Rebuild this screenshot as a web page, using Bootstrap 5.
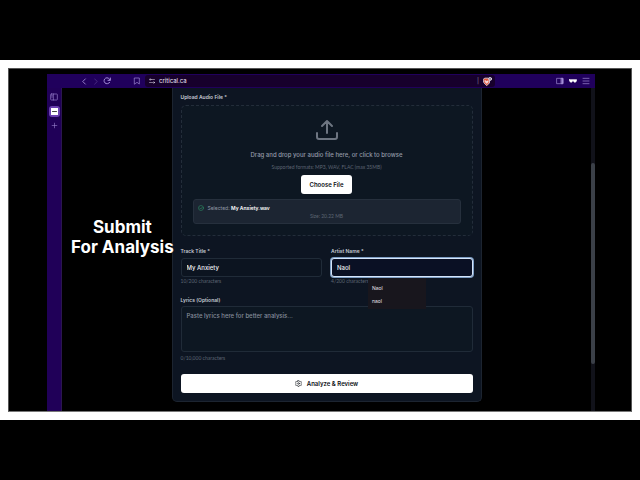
<!DOCTYPE html>
<html lang="en">
<head>
<meta charset="utf-8">
<meta name="viewport" content="width=device-width, initial-scale=1">
<title>Submit for analysis</title>
<link rel="stylesheet" href="https://cdn.jsdelivr.net/npm/bootstrap@5.3.0/dist/css/bootstrap.min.css">
<style>
body{background:#000;color:#d3d8e0;font-family:Inter,"Open Sans",sans-serif;font-size:6px;line-height:8px}
svg{display:block;fill:none;stroke:currentColor;stroke-width:2;stroke-linecap:round;stroke-linejoin:round}
button,input,textarea{font:inherit}
.frame{background:#fff;padding:8px}
.stage{background:#000;padding:5px 36px 0 38px;border:1px solid #555;border-bottom-color:#777}
.chrome-bar{background:#20005c;height:14px;color:#a58ed8;padding:0 5px 0 34px}
.plain{background:none;border:0;padding:0;color:inherit}
.nav-tools{gap:4px}
.mark-btn{margin-left:22px;margin-right:4px}
.address{background:#17002c;color:#f0eaf8;height:12px;padding:0 3px 0 4px;gap:4px;border-radius:3px}
.address input{background:none;border:0;color:inherit;padding:0;min-width:0;outline:0}
.right-tools{margin-left:61px;gap:5px}
.side{background:#200058;width:15px;color:#9c84d0;padding-top:5px;gap:5px;border-right:1px solid #2b1650}
.tab-on{background:#6a3fb0;border-radius:3px;padding:2px;color:#444}
.tab-on span{background:#fff;width:7px;height:7px}
.side-cap{flex:1 1 0;min-width:0;color:#fff;font-weight:700;font-size:17px;line-height:20px;white-space:nowrap;z-index:1}
.side-cap h1{font:inherit;display:inline-block;margin:129px 0 0 9px}
.panel{flex:0 1 310px;background:#0d1522;border:1px solid #1c2430;border-top:0;border-radius:0 0 5px 5px;padding:5px 8px 8px;margin-bottom:9px}
.lab{display:block;font-weight:600;font-size:5px;color:#c5cad3}
.drop{border:1px dashed #232d3a;border-radius:5px;background:#0d1722;margin-top:4px;padding:12px 11px 11px}
.hint{color:#949ba9;font-size:6px;font-weight:500;margin-top:9px}
.tiny{font-family:Lato,sans-serif;font-size:5px;color:#5d6573}
.white-btn{background:#fff;color:#0a0d14;border:0;border-radius:3px;height:19px;font-weight:600;padding:0 9px}
.picked{background:#1c2532;border:1px solid #26303d;border-radius:3px;padding:4px 4px 3px;margin-top:5px}
.picked strong{color:#fff;font-weight:600}
.pick-row{gap:4px;color:#9299a6;font-size:5px}
.ok{color:#2f9d6b}
.pair{gap:9px;margin-top:11px}
.field{display:block;width:100%;background:#0c1420;border:1px solid #202b38;border-radius:3px;color:#eef0f4;height:19px;padding:0 5px;margin-top:3px;outline:0;font-weight:500}
.field::placeholder{color:#858d9b;opacity:1}
.field-on{border-color:#d5e5fa;box-shadow:0 0 0 1px #7d9dc4;background:#0a1024}
.notes{background:#0d1722;height:46px;padding:5px;resize:none;margin:2px 0}
.suggest{position:absolute;left:37px;top:31px;width:58px;background:#18161d;color:#e8e6ea;font-size:5px;padding:6px 4px 4px;z-index:2;gap:5px}
.lyrics{margin-top:11px}
.go{width:100%;margin-top:12px;gap:5px}
.bar{width:4px;background:#11121a;padding-top:75px;padding-bottom:47px}
.thumb{background:#3b4048;border-radius:2px;flex:1}
.side-gap{flex:1 1 0}
</style>
</head>
<body>
<div class="min-vh-100 d-flex flex-column justify-content-center">
<main class="frame">
<div class="stage">
  <header class="chrome-bar d-flex align-items-center">
    <div class="nav-tools d-flex">
      <button class="plain" aria-label="Back"><svg width="7" height="7" viewBox="0 0 24 24"><path d="M15 3l-9 9 9 9" stroke-width="3"/></svg></button>
      <button class="plain opacity-50" aria-label="Forward"><svg width="7" height="7" viewBox="0 0 24 24"><path d="M9 3l9 9-9 9"/></svg></button>
      <button class="plain" aria-label="Reload"><svg width="8" height="8" viewBox="0 0 24 24"><path d="M20 16a9 9 0 1 1 1-7M22 3v7h-7" stroke-width="3"/></svg></button>
    </div>
    <button class="plain mark-btn" aria-label="Bookmark"><svg width="8" height="8" viewBox="0 0 24 24"><path d="M5 3h14v18l-7-5-7 5z"/></svg></button>
    <div class="address d-flex align-items-center flex-fill">
      <svg width="6" height="6" viewBox="0 0 24 24" stroke-width="3"><circle cx="5" cy="6" r="3"/><path d="M11 6h11M2 18h11"/><circle cx="19" cy="18" r="3"/></svg>
      <input class="flex-fill" aria-label="Address" value="critical.ca">
      <span class="opacity-50">|</span>
      <svg width="9" height="9" viewBox="0 0 24 24" stroke="none"><path d="M1 6l4-3h9l4 3-1 10-7 7-7-7z" fill="#e4573a"/><path d="M6 10l4 2 4-2-1 4-3 3-3-3z" fill="#f6d5cc"/><circle cx="19" cy="5" r="4" fill="#8a8593"/></svg>
    </div>
    <div class="right-tools d-flex align-items-center">
      <button class="plain" aria-label="Side panel"><svg width="8" height="8" viewBox="0 0 24 24"><path d="M3 4h18v16H3z"/><path d="M16 4h5v16h-5z" fill="currentColor"/></svg></button>
      <button class="plain text-white" aria-label="Private mode"><svg width="8" height="8" viewBox="0 0 24 24"><path d="M1 8h22c0 9-8 10-10 3h-2C9 18 1 17 1 8z" fill="currentColor"/></svg></button>
      <button class="plain" aria-label="Menu"><svg width="8" height="8" viewBox="0 0 24 24"><path d="M3 4h18M3 12h18M3 20h18"/></svg></button>
    </div>
  </header>
  <div class="d-flex">
    <nav class="side d-flex flex-column align-items-center" aria-label="Tabs">
      <button class="plain" aria-label="Toggle sidebar"><svg width="8" height="8" viewBox="0 0 24 24"><rect x="2" y="3" width="20" height="18" rx="2"/><path d="M10 3v18M5 8h2M5 12h2"/></svg></button>
      <button class="plain tab-on" aria-label="Current tab"><span class="d-flex align-items-center justify-content-center"><svg width="5" height="3" viewBox="0 0 10 6"><path d="M1 3h8"/></svg></span></button>
      <button class="plain" aria-label="New tab"><svg width="7" height="7" viewBox="0 0 24 24"><path d="M12 4v16M4 12h16"/></svg></button>
    </nav>
    <div class="side-cap"><h1 class="text-center">Submit<br>For Analysis</h1></div>
    <form class="panel">
      <label class="lab" for="audio">Upload Audio File *</label>
      <div class="drop text-center">
        <svg class="mx-auto" width="24" height="24" viewBox="0 0 24 24" color="#6d7581"><path d="M2 15v4a2 2 0 0 0 2 2h16a2 2 0 0 0 2-2v-4M12 15V3M7 8l5-5 5 5"/></svg>
        <div class="hint">Drag and drop your audio file here, or click to browse</div>
        <div class="tiny mt-1">Supported formats: MP3, WAV, FLAC (max 35MB)</div>
        <button type="button" id="audio" class="white-btn mt-1">Choose File</button>
        <div class="picked">
          <div class="pick-row d-flex align-items-center">
            <svg class="ok" width="6" height="6" viewBox="0 0 24 24" stroke-width="3"><circle cx="12" cy="12" r="10"/><path d="M7 12l4 4 6-7"/></svg>
            <span>Selected: <strong>My Anxiety.wav</strong></span>
          </div>
          <div class="tiny">Size: 20.22 MB</div>
        </div>
      </div>
      <div class="pair d-flex">
        <div class="flex-fill">
          <label class="lab" for="track">Track Title *</label>
          <input class="field" id="track" value="My Anxiety">
          <div class="tiny">10/200 characters</div>
        </div>
        <div class="flex-fill position-relative">
          <label class="lab" for="artist">Artist Name *</label>
          <input class="field field-on" id="artist" value="Naol" autofocus>
          <div class="tiny">4/200 characters</div>
          <div class="suggest d-flex flex-column"><span>Naol</span><span>naol</span></div>
        </div>
      </div>
      <div class="lyrics">
        <label class="lab" for="lyrics">Lyrics (Optional)</label>
        <textarea class="field notes" id="lyrics" placeholder="Paste lyrics here for better analysis..."></textarea>
        <div class="tiny">0/10,000 characters</div>
      </div>
      <button type="button" class="white-btn go d-flex align-items-center justify-content-center">
        <svg width="7" height="7" viewBox="0 0 24 24"><path d="M10 2h4l1 3 3 1 3-1 2 4-2 3 2 3-2 4-3-1-3 1-1 3h-4l-1-3-3-1-3 1-2-4 2-3-2-3 2-4 3 1 3-1z"/><circle cx="12" cy="12" r="3"/></svg>
        Analyze &amp; Review
      </button>
    </form>
    <div class="side-gap"></div>
    <div class="bar d-flex flex-column"><div class="thumb"></div></div>
  </div>
</div>
</main>
</div>
<script src="https://cdn.jsdelivr.net/npm/bootstrap@5.3.0/dist/js/bootstrap.bundle.min.js"></script>
</body>
</html>
